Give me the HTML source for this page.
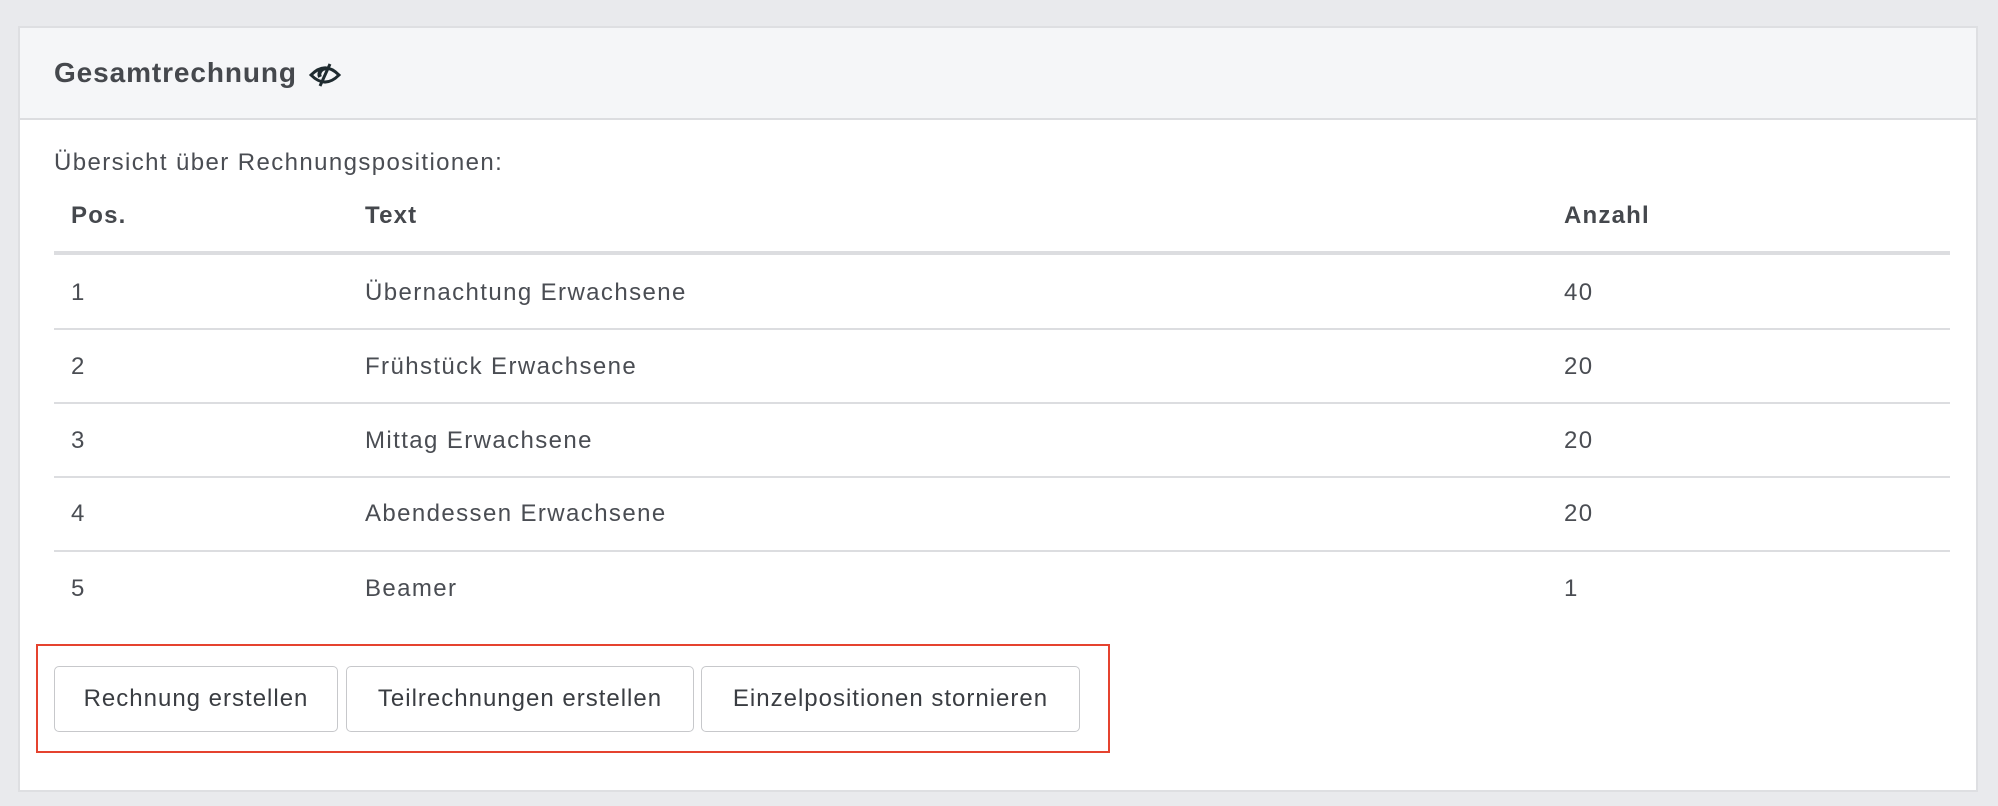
<!DOCTYPE html>
<html><head><meta charset="utf-8"><style>
*{box-sizing:border-box;margin:0;padding:0}
body{width:1998px;height:806px;background:#e9eaed;font-family:"Liberation Sans",Arial,sans-serif;color:#4a4d53;position:relative;overflow:hidden}
.card{position:absolute;left:18px;top:26px;width:1960px;height:766px;background:#fff;border:2px solid #dedfe2}
.hdr{position:absolute;left:0;top:0;right:0;height:92px;background:#f5f6f8;border-bottom:2px solid #dcdde0}
.title{position:absolute;left:34px;top:29px;font-size:28px;font-weight:bold;color:#45484d;letter-spacing:0.9px}
.abs{position:absolute;white-space:nowrap}
.t{font-size:24px;letter-spacing:1.4px}
.b{font-size:24px;font-weight:bold;color:#45484d;letter-spacing:1.2px}
.line{position:absolute;left:34px;width:1896px;height:2px;background:#dcdde0}
.btn{position:absolute;top:638px;height:66px;border:1.5px solid #c7c8cb;border-radius:5px;background:#fff;font-size:24px;letter-spacing:1px;color:#3a3d42;display:flex;align-items:center;justify-content:center;white-space:nowrap}
.red{position:absolute;left:16px;top:616px;width:1074px;height:109px;border:2.5px solid #e5432f}
</style></head><body>
<div class="card">
<div class="hdr"><div class="title">Gesamtrechnung</div>
<svg class="abs" style="left:288px;top:35px" width="34" height="24" viewBox="0 0 34 24"><path d="M3 12 Q17 -2 31 12 Q17 26 3 12Z" fill="none" stroke="#1f2b30" stroke-width="3"/><path d="M12 14 a6 6 0 0 1 8 -8" fill="none" stroke="#1f2b30" stroke-width="4"/><line x1="22" y1="1" x2="12" y2="23" stroke="#1f2b30" stroke-width="3"/></svg>
</div>
<div class="abs t" style="left:34px;top:121px">Übersicht über Rechnungspositionen:</div>
<div class="abs b" style="left:51px;top:174px">Pos.</div>
<div class="abs b" style="left:345px;top:174px">Text</div>
<div class="abs b" style="left:1544px;top:174px">Anzahl</div>
<div class="line" style="top:223px;height:4px"></div>
<div class="abs t" style="left:51px;top:251px">1</div><div class="abs t" style="left:345px;top:251px">Übernachtung Erwachsene</div><div class="abs t" style="left:1544px;top:251px">40</div>
<div class="line" style="top:300px"></div>
<div class="abs t" style="left:51px;top:325px">2</div><div class="abs t" style="left:345px;top:325px">Frühstück Erwachsene</div><div class="abs t" style="left:1544px;top:325px">20</div>
<div class="line" style="top:374px"></div>
<div class="abs t" style="left:51px;top:399px">3</div><div class="abs t" style="left:345px;top:399px">Mittag Erwachsene</div><div class="abs t" style="left:1544px;top:399px">20</div>
<div class="line" style="top:448px"></div>
<div class="abs t" style="left:51px;top:472px">4</div><div class="abs t" style="left:345px;top:472px">Abendessen Erwachsene</div><div class="abs t" style="left:1544px;top:472px">20</div>
<div class="line" style="top:522px"></div>
<div class="abs t" style="left:51px;top:547px">5</div><div class="abs t" style="left:345px;top:547px">Beamer</div><div class="abs t" style="left:1544px;top:547px">1</div>
<div class="red"></div>
<div class="btn" style="left:34px;width:284px">Rechnung erstellen</div>
<div class="btn" style="left:326px;width:348px">Teilrechnungen erstellen</div>
<div class="btn" style="left:681px;width:379px">Einzelpositionen stornieren</div>
</div>
</body></html>
